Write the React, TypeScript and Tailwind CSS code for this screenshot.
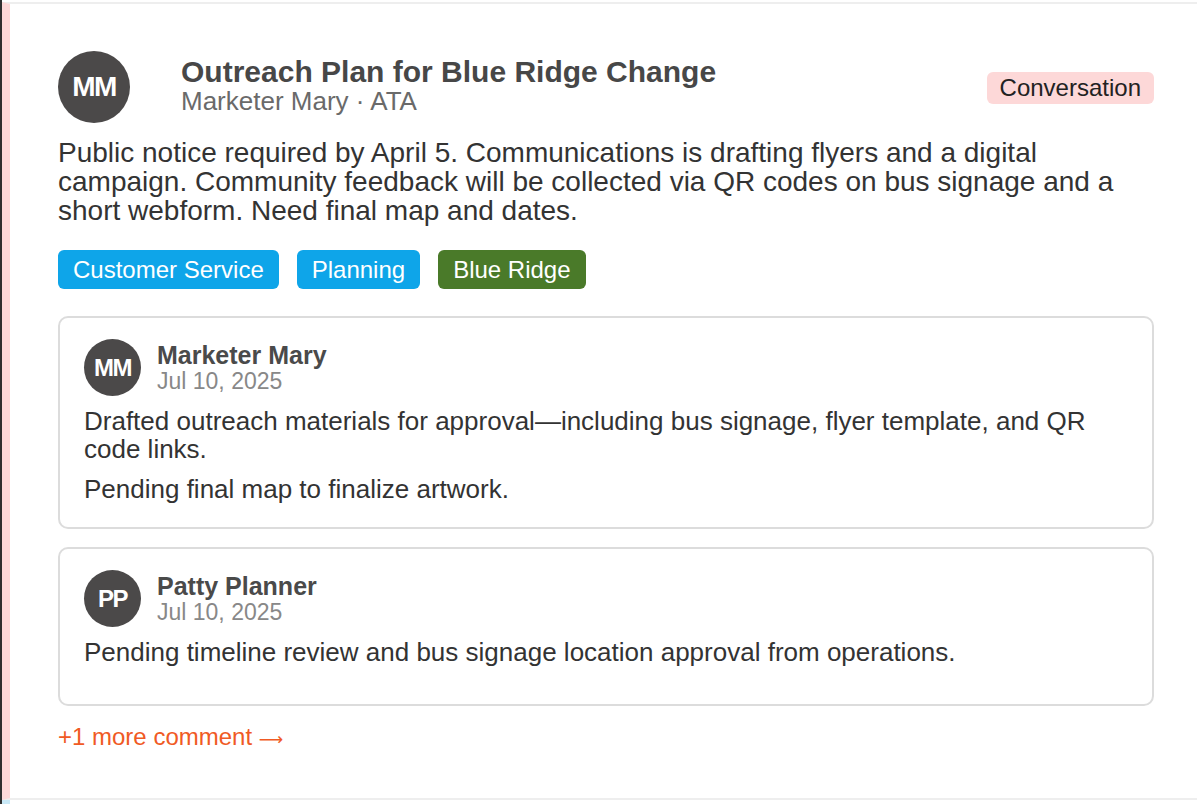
import React from 'react';

type Tag = { label: string; color: string };

type Comment = {
  initials: string;
  author: string;
  date: string;
  paragraphs: string[];
  pad: string;
};

const tags: Tag[] = [
  { label: 'Customer Service', color: 'bg-[#0ea5e9]' },
  { label: 'Planning', color: 'bg-[#0ea5e9]' },
  { label: 'Blue Ridge', color: 'bg-[#4a7a29]' },
];

const comments: Comment[] = [
  {
    initials: 'MM',
    author: 'Marketer Mary',
    date: 'Jul 10, 2025',
    paragraphs: [
      'Drafted outreach materials for approval\u2014including bus signage, flyer template, and QR code links.',
      'Pending final map to finalize artwork.',
    ],
    pad: 'pb-[24px]',
  },
  {
    initials: 'PP',
    author: 'Patty Planner',
    date: 'Jul 10, 2025',
    paragraphs: ['Pending timeline review and bus signage location approval from operations.'],
    pad: 'pb-[38px]',
  },
];

const CommentCard: React.FC<{ comment: Comment }> = ({ comment }) => {
  return (
    <div className={`rounded-[10px] border-2 border-[#dcdcdc] px-6 pt-[21px] ${comment.pad}`}>
      <div className="flex items-center gap-4">
        <div className="flex h-[57px] w-[57px] shrink-0 items-center justify-center rounded-full bg-[#4b4949] text-[24px] font-bold tracking-[-1.5px] text-white">
          {comment.initials}
        </div>
        <div className="flex flex-col">
          <span className="text-[25px] font-bold leading-[27px] text-[#4a4a4a]">{comment.author}</span>
          <span className="text-[23px] leading-[25px] text-[#888888]">{comment.date}</span>
        </div>
      </div>
      <div className="mt-[11px] flex flex-col gap-[12px] text-[26px] leading-[28px] text-[#333333]">
        {comment.paragraphs.map((p) => (
          <p key={p}>{p}</p>
        ))}
      </div>
    </div>
  );
};

export default function App() {
  return (
    <div
      className="min-h-screen border-l-2 border-[#2f2f2f] bg-white pt-[2px]"
      style={{ fontFamily: '"Liberation Sans", Arial, Helvetica, sans-serif' }}
    >
      <div className="border-y-2 border-l-[8px] border-y-[#eeeeee] border-l-[#fdd8d8] pt-[47px] pb-[46px] pl-12 pr-[43px]">
        <div className="flex items-start">
          <div className="flex h-[72px] w-[72px] shrink-0 items-center justify-center rounded-full bg-[#4b4949] text-[28px] font-bold tracking-[-1.5px] text-white">
            MM
          </div>
          <div className="ml-[51px] flex flex-col pt-[5px]">
            <h2 className="text-[30px] font-bold leading-[32px] text-[#474747]">
              Outreach Plan for Blue Ridge Change
            </h2>
            <span className="text-[26px] leading-[26px] text-[#6a6a6a]">Marketer Mary &middot; ATA</span>
          </div>
          <span className="ml-auto mt-[21px] rounded-[6px] bg-[#fdd8d8] px-[13px] py-[2px] text-[24px] leading-[28px] text-[#222222]">
            Conversation
          </span>
        </div>

        <p className="mt-[15px] text-[28px] leading-[29px] text-[#333333]">
          Public notice required by April 5. Communications is drafting flyers and a digital campaign. Community
          feedback will be collected via QR codes on bus signage and a short webform. Need final map and dates.
        </p>

        <div className="mt-[25px] flex gap-[18px]">
          {tags.map((t) => (
            <span
              key={t.label}
              className={`${t.color} rounded-[6px] px-[15px] py-[6px] text-[24px] leading-[27px] text-white`}
            >
              {t.label}
            </span>
          ))}
        </div>

        <div className="mt-[27px] flex flex-col gap-[18px]">
          {comments.map((c) => (
            <CommentCard key={c.author} comment={c} />
          ))}
        </div>

        <a className="mt-[18px] block text-[24px] leading-[26px] text-[#f05a24]" href="#">
          +1 more comment{' '}
          <span style={{ fontFamily: '"DejaVu Sans", sans-serif' }} className="text-[17px]">
            &#x27F6;
          </span>
        </a>
      </div>
      <div className="h-2 border-l-[8px] border-l-[#c9e9f7]" />
    </div>
  );
}
